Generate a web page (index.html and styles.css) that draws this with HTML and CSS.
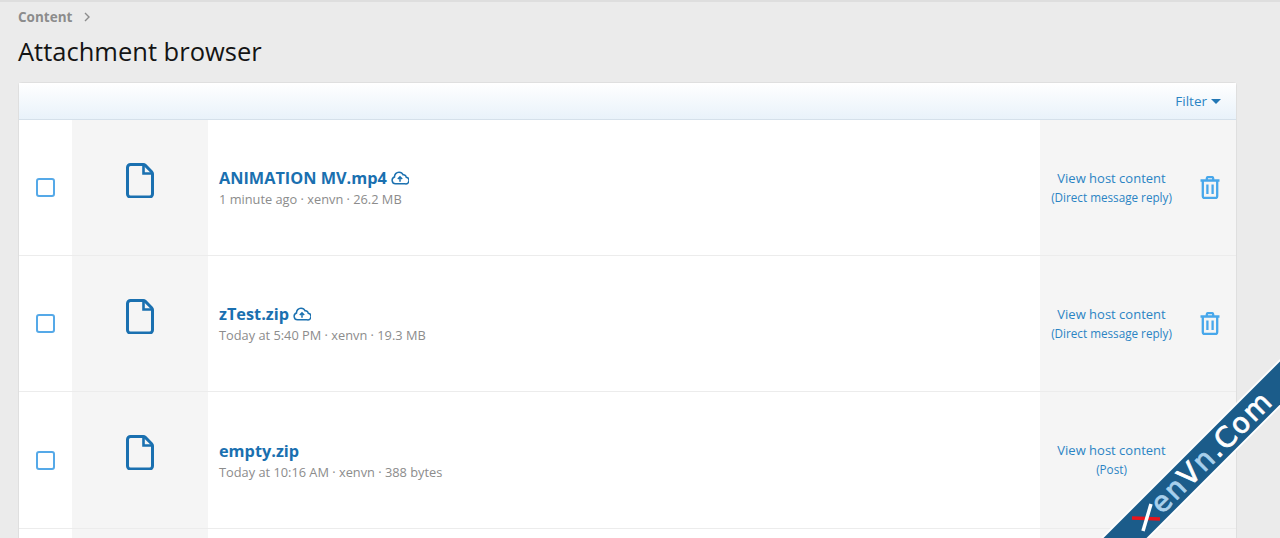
FILE: index.html
```html
<!DOCTYPE html>
<html lang="en">
<head>
    <meta charset="UTF-8">
    <meta name="viewport" content="width=device-width, initial-scale=1.0">
    <title>Attachment browser</title>
    <link rel="stylesheet" href="styles.css">
</head>
<body>
    <div class="crumbs">
        <a href="#">Content</a>
        <svg class="crumb-arrow" width="6" height="10" viewBox="0 0 6 10"><path d="M1 1l4 4-4 4" fill="none" stroke="#8c8c8c" stroke-width="1.4"/></svg>
    </div>
    <h1>Attachment browser</h1>

    <div class="block">
        <div class="block-head">
            <a href="#">Filter</a>
            <span class="caret"></span>
        </div>

        <div class="row">
            <div class="col-check"><span class="checkbox"></span></div>
            <div class="col-icon">
                <svg width="28" height="35" viewBox="0 0 28 35"><path d="M4.500 1.500h12.700c.8 0 1.500.3 2.100.9l6.300 6.300c.6.6.9 1.300.9 2.100v20.200a3 3 0 0 1-3 3h-19a3 3 0 0 1-3-3v-26.500a3 3 0 0 1 3-3z" fill="none" stroke="#1a70b0" stroke-width="3"/><path d="M17.500 2.500v8h8" fill="none" stroke="#1a70b0" stroke-width="2.600"/></svg>
            </div>
            <div class="col-main">
                <div class="file-title">
                    <a href="#">ANIMATION MV.mp4</a>
                    <svg class="cloud" width="18" height="14" viewBox="0 0 18 14"><path d="M4.500 12.800a3.500 3.500 0 0 1-1-6.800A4.500 4.500 0 0 1 8 1.200a4.400 4.400 0 0 1 4.100 2.600 2.700 2.700 0 0 1 3.100 2.400 3.300 3.300 0 0 1-1.200 6.600z" fill="none" stroke="#1a70b0" stroke-width="1.500"/><path d="M9 10.800V6M6.800 8L9 5.800 11.200 8" fill="none" stroke="#1a70b0" stroke-width="1.500"/></svg>
                </div>
                <div class="file-meta">1 minute ago · xenvn · 26.2 MB</div>
            </div>
            <div class="col-link">
                <a href="#">View host content</a>
                <a href="#" class="small">(Direct message reply)</a>
            </div>
            <div class="col-del">
                <svg width="20" height="23" viewBox="0 0 20 23"><path d="M.5 4.500h19M6.800 4.500V2.400c0-.7.6-1.300 1.300-1.300h3.800c.7 0 1.300.6 1.300 1.300v2.100M2.800 4.500v15.800c0 1 .8 1.700 1.700 1.700h11c.9 0 1.700-.7 1.700-1.700V4.500M7.400 8.500v9.500M12.600 8.500v9.500" fill="none" stroke="#47a7eb" stroke-width="2.300"/></svg>
            </div>
        </div>

        <div class="row">
            <div class="col-check"><span class="checkbox"></span></div>
            <div class="col-icon">
                <svg width="28" height="35" viewBox="0 0 28 35"><path d="M4.500 1.500h12.700c.8 0 1.500.3 2.100.9l6.300 6.300c.6.6.9 1.300.9 2.100v20.200a3 3 0 0 1-3 3h-19a3 3 0 0 1-3-3v-26.500a3 3 0 0 1 3-3z" fill="none" stroke="#1a70b0" stroke-width="3"/><path d="M17.500 2.500v8h8" fill="none" stroke="#1a70b0" stroke-width="2.600"/></svg>
            </div>
            <div class="col-main">
                <div class="file-title">
                    <a href="#">zTest.zip</a>
                    <svg class="cloud" width="18" height="14" viewBox="0 0 18 14"><path d="M4.500 12.800a3.500 3.500 0 0 1-1-6.800A4.500 4.500 0 0 1 8 1.200a4.400 4.400 0 0 1 4.100 2.600 2.700 2.700 0 0 1 3.100 2.400 3.300 3.300 0 0 1-1.200 6.600z" fill="none" stroke="#1a70b0" stroke-width="1.500"/><path d="M9 10.800V6M6.800 8L9 5.800 11.200 8" fill="none" stroke="#1a70b0" stroke-width="1.500"/></svg>
                </div>
                <div class="file-meta">Today at 5:40 PM · xenvn · 19.3 MB</div>
            </div>
            <div class="col-link">
                <a href="#">View host content</a>
                <a href="#" class="small">(Direct message reply)</a>
            </div>
            <div class="col-del">
                <svg width="20" height="23" viewBox="0 0 20 23"><path d="M.5 4.500h19M6.800 4.500V2.400c0-.7.6-1.300 1.300-1.300h3.800c.7 0 1.300.6 1.300 1.300v2.100M2.800 4.500v15.800c0 1 .8 1.700 1.700 1.700h11c.9 0 1.700-.7 1.700-1.700V4.500M7.400 8.500v9.500M12.600 8.500v9.500" fill="none" stroke="#47a7eb" stroke-width="2.300"/></svg>
            </div>
        </div>

        <div class="row row-tall">
            <div class="col-check"><span class="checkbox"></span></div>
            <div class="col-icon">
                <svg width="28" height="35" viewBox="0 0 28 35"><path d="M4.500 1.500h12.700c.8 0 1.500.3 2.100.9l6.300 6.300c.6.6.9 1.300.9 2.100v20.200a3 3 0 0 1-3 3h-19a3 3 0 0 1-3-3v-26.500a3 3 0 0 1 3-3z" fill="none" stroke="#1a70b0" stroke-width="3"/><path d="M17.500 2.500v8h8" fill="none" stroke="#1a70b0" stroke-width="2.600"/></svg>
            </div>
            <div class="col-main">
                <div class="file-title"><a href="#">empty.zip</a></div>
                <div class="file-meta">Today at 10:16 AM · xenvn · 388 bytes</div>
            </div>
            <div class="col-link">
                <a href="#">View host content</a>
                <a href="#" class="small">(Post)</a>
            </div>
            <div class="col-del"></div>
        </div>

        <div class="row row-cut">
            <div class="col-check"></div>
            <div class="col-icon"></div>
            <div class="col-main"></div>
            <div class="col-link"></div>
            <div class="col-del"></div>
        </div>
    </div>

    <!-- watermark in the corner -->
    <svg class="watermark" width="180" height="180" viewBox="0 0 180 180">
        <polygon points="180,1 180,49 49,180 1,180" fill="#fff"/>
        <polygon points="180,3.500 180,46.500 46.500,180 3.500,180" fill="#1b5c8a"/>
        <line x1="32" y1="160" x2="60" y2="161" stroke="#e8141c" stroke-width="3.500"/>
        <line x1="51" y1="146" x2="43" y2="173" stroke="#fff" stroke-width="3.500"/>
        <text class="watermark-text" transform="translate(62 157) rotate(-45)"><tspan class="wm-light">en</tspan>V<tspan class="wm-light">n</tspan>.Com</text>
    </svg>
</body>
</html>
```

FILE: styles.css
```css
body {
    margin: 0;
    height: 538px;
    overflow: hidden;
    position: relative;
    box-sizing: border-box;
    padding: 0 43px 0 18px;
    background: #ebebeb;
    border-top: 2px solid #dedede;
    font-family: "Open Sans", "Noto Sans", Arial, sans-serif;
    color: #141414;
}
a {
    text-decoration: none;
    color: #2b84c4;
}
.crumbs {
    display: flex;
    align-items: center;
    gap: 12px;
    height: 13px;
    margin-top: 8px;
    font-size: 13.500px;
    font-weight: 700;
}
.crumbs a {
    color: #8c8c8c;
}
h1 {
    margin: 11px 0 0;
    font-size: 25.500px;
    font-weight: 400;
    line-height: 34px;
    color: #141414;
}
.block {
    margin-top: 14px;
    background: #fff;
    border: 1px solid #dfdfdf;
    border-bottom: 0;
    border-radius: 4px 4px 0 0;
}
.block-head {
    display: flex;
    justify-content: flex-end;
    align-items: center;
    gap: 4px;
    height: 36px;
    padding-right: 15px;
    background: linear-gradient(#ffffff, #e9f2fa);
    border-bottom: 1px solid #d5e0ea;
    font-size: 13.500px;
}
.caret {
    border: 5px solid transparent;
    border-top-color: #2277b5;
    border-bottom: 0;
}
.row {
    display: flex;
    height: 135px;
    border-bottom: 1px solid #ececec;
}
.row-tall {
    height: 136px;
}
.row-cut {
    height: 9px;
    border-bottom: 0;
}
.col-check {
    width: 53px;
    display: flex;
    align-items: center;
    justify-content: center;
}
.checkbox {
    width: 15px;
    height: 15px;
    border: 2px solid #55a9e8;
    border-radius: 3px;
}
.col-icon {
    width: 136px;
    background: #f5f5f5;
    display: flex;
    align-items: center;
    justify-content: center;
    padding-bottom: 15px;
    box-sizing: border-box;
}
.col-main {
    flex: 1;
    padding: 46px 0 0 11px;
}
.row-tall .col-main {
    padding-top: 47px;
}
.row-cut .col-main,
.row-cut .col-icon {
    padding: 0;
}
.file-title {
    display: flex;
    align-items: center;
    gap: 4px;
    font-size: 16.300px;
    font-weight: 700;
    line-height: 24px;
}
.file-title a {
    color: #1a70b0;
}
.file-meta {
    font-size: 12.800px;
    line-height: 19px;
    color: #8c8c8c;
}
.col-link {
    width: 143px;
    background: #f5f5f5;
    display: flex;
    flex-direction: column;
    align-items: center;
    justify-content: center;
    font-size: 13px;
    line-height: 19px;
    text-align: center;
}
.col-link .small {
    font-size: 11.700px;
}
.col-del {
    width: 53px;
    background: #f5f5f5;
    display: flex;
    align-items: center;
    justify-content: center;
}
.watermark {
    position: absolute;
    right: 0;
    bottom: 0;
}
.watermark-text {
    font-family: "DejaVu Sans", sans-serif;
    font-size: 28px;
    letter-spacing: 1.800px;
    fill: #fff;
    stroke: #fff;
    stroke-width: 0.8px;
}
.wm-light {
    fill: #a8d0ec;
    stroke: #a8d0ec;
}
```
